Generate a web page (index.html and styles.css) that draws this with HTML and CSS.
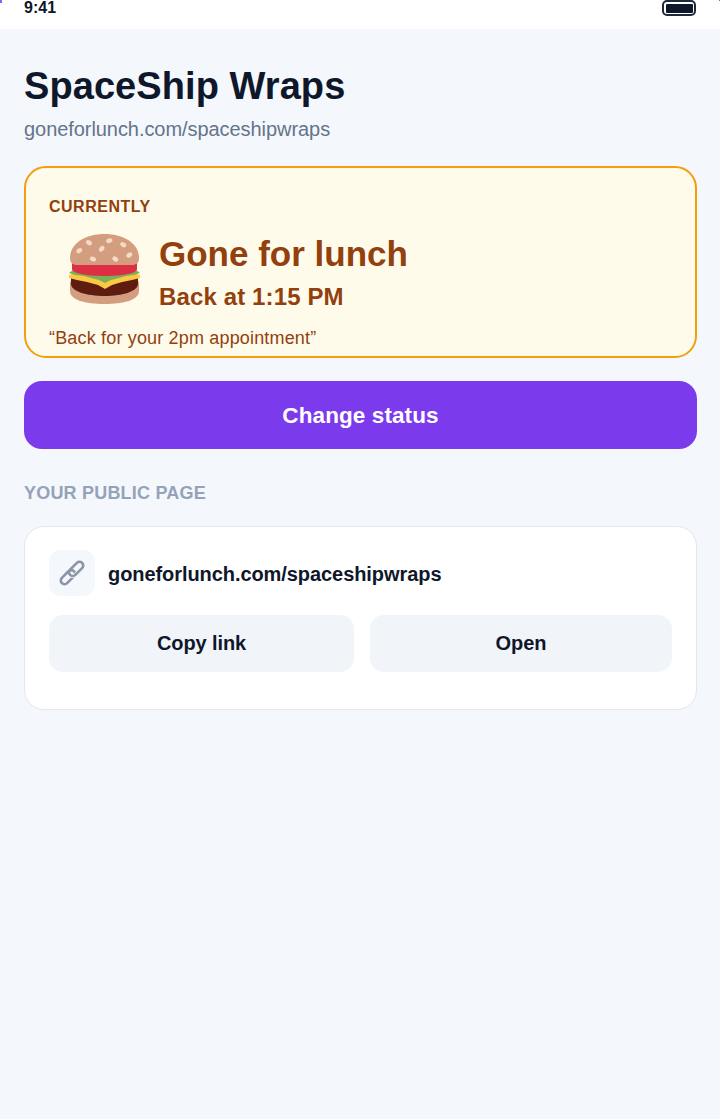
FILE: index.html
```html
<!DOCTYPE html>
<html lang="en">
<head>
    <meta charset="UTF-8">
    <meta name="viewport" content="width=device-width, initial-scale=1.0">
    <title>SpaceShip Wraps</title>
    <link rel="stylesheet" href="styles.css">
</head>
<body>
    <div class="status-bar">
        <span class="status-time">9:41</span>
        <span class="battery"><span class="battery-fill"></span></span>
    </div>

    <main class="content">
        <h1>SpaceShip Wraps</h1>
        <p class="page-url">goneforlunch.com/spaceshipwraps</p>

        <section class="status-card">
            <div class="status-label">CURRENTLY</div>
            <div class="status-row">
                <svg class="burger" viewBox="0 0 80 80" width="80" height="80" role="img" aria-label="Burger">
                    <path fill="#d59d80" d="M6 55c0-4 3-6 7-6h55c4 0 7 2 7 6v7c0 9-15 13-34.500 13S6 71 6 62z"/>
                    <path fill="#5f1d0f" d="M7 47h67v8c0 7-15 12-33.500 12S7 62 7 55z"/>
                    <path fill="#fcc846" d="M5 46L12 44H70L76 46V49L68 51 58 53 48 56 41 60 34 56 23 53 13 51 5 49Z"/>
                    <path fill="#77b255" d="M5 44L9 41H72L76 44 70 46 62 47 55 49 47 51 41 54 35 51 27 49 20 47 11 46Z"/>
                    <path fill="#dd2e44" d="M8 33h65v7c0 4-13 7-32.500 7S8 44 8 40z"/>
                    <path fill="#d59d80" d="M6 29C6 14 22 5 40.500 5S75 14 75 29c0 5-3 7-7 7H13c-4 0-7-2-7-7z"/>
                    <g fill="#f2dcc4">
                        <ellipse cx="25" cy="13.700" rx="3.200" ry="2.300" transform="rotate(30 25 13.700)"/>
                        <ellipse cx="45.300" cy="11.700" rx="3.200" ry="2.300" transform="rotate(-20 45.300 11.700)"/>
                        <ellipse cx="59.300" cy="15.700" rx="3.200" ry="2.300" transform="rotate(30 59.300 15.700)"/>
                        <ellipse cx="15.300" cy="21.700" rx="3.200" ry="2.300" transform="rotate(-35 15.300 21.700)"/>
                        <ellipse cx="37.700" cy="19.700" rx="3.200" ry="2.300" transform="rotate(-50 37.700 19.700)"/>
                        <ellipse cx="65.300" cy="26" rx="3.200" ry="2.300" transform="rotate(-35 65.300 26)"/>
                        <ellipse cx="29" cy="30" rx="3.200" ry="2.300" transform="rotate(25 29 30)"/>
                        <ellipse cx="51.300" cy="30" rx="3.200" ry="2.300" transform="rotate(35 51.300 30)"/>
                    </g>
                </svg>
                <div class="status-text">
                    <div class="status-title">Gone for lunch</div>
                    <div class="status-back">Back at 1:15 PM</div>
                </div>
            </div>
            <p class="status-note">“Back for your 2pm appointment”</p>
        </section>

        <button class="change-button">Change status</button>

        <h2>YOUR PUBLIC PAGE</h2>

        <section class="link-card">
            <div class="link-row">
                <div class="link-icon">
                    <svg viewBox="0 0 28 28" width="28" height="28" fill="none" stroke-width="2.600" stroke-linecap="round">
                        <g transform="rotate(-45 14 14)">
                            <rect x="-0.300" y="10.300" width="17" height="7.400" rx="3.700" stroke="#8b95a7"/>
                            <rect x="11.300" y="10.300" width="17" height="7.400" rx="3.700" stroke="#f4f7fc" stroke-width="3.800"/>
                            <rect x="11.300" y="10.300" width="17" height="7.400" rx="3.700" stroke="#8b95a7"/>
                            <path d="M9 10.300h4a3.700 3.700 0 0 1 3 1.700" stroke="#8b95a7"/>
                        </g>
                    </svg>
                </div>
                <span class="link-text">goneforlunch.com/spaceshipwraps</span>
            </div>
            <div class="link-actions">
                <button class="action-button copy-button">Copy link</button>
                <button class="action-button">Open</button>
            </div>
        </section>
    </main>
</body>
</html>
```

FILE: styles.css
```css
* {
    box-sizing: border-box;
}
html, body {
    margin: 0;
    padding: 0;
}
body {
    font-family: "Liberation Sans", Arial, sans-serif;
    background-color: #f4f7fc;
    color: #0f172a;
    min-height: 1119px;
}
.status-bar {
    position: relative;
    height: 29px;
    background: #fff;
    padding: 0 24px;
    display: flex;
    justify-content: space-between;
    align-items: flex-start;
}
/* tiny purple specks in the top corners */
.status-bar::before,
.status-bar::after {
    content: "";
    position: absolute;
    top: 0;
    background: #8b5cf6;
}
.status-bar::before {
    left: 0;
    width: 2px;
    height: 3px;
}
.status-bar::after {
    right: 0;
    width: 1px;
    height: 1px;
}
.status-time {
    font-size: 16px;
    font-weight: bold;
    line-height: 16px;
}
.battery {
    width: 34px;
    height: 16px;
    border: 2.5px solid #1e293b;
    border-radius: 5px;
    padding: 1.5px;
    display: block;
}
.battery-fill {
    display: block;
    height: 100%;
    background: #0f172a;
    border-radius: 1px;
}
.content {
    padding: 0 23px 0 24px;
}
h1 {
    margin: 35px 0 0;
    font-size: 38px;
    line-height: 44px;
    font-weight: bold;
    letter-spacing: 0.07px;
}
.page-url {
    margin: 9px 0 0;
    font-size: 20px;
    line-height: 24px;
    letter-spacing: -0.06px;
    color: #64748b;
}
.status-card {
    margin-top: 25px;
    height: 192px;
    padding: 30px 23px 0;
    background: #fffbeb;
    border: 2px solid #f59e0b;
    border-radius: 22px;
    color: #92400e;
}
.status-label {
    font-size: 16px;
    font-weight: bold;
    line-height: 18px;
    letter-spacing: 0.5px;
}
.status-row {
    display: flex;
    align-items: flex-start;
    gap: 15px;
    margin-top: 13px;
    padding-left: 15px;
}
.burger {
    flex-shrink: 0;
}
.status-text {
    padding-top: 5px;
}
.status-title {
    font-size: 35px;
    font-weight: bold;
    line-height: 40px;
}
.status-back {
    margin-top: 9px;
    font-size: 24px;
    font-weight: bold;
    line-height: 28px;
    letter-spacing: 0.13px;
}
.status-note {
    margin: 16px 0 0;
    font-size: 18px;
    line-height: 22px;
    letter-spacing: 0.17px;
}
.change-button {
    display: block;
    width: 100%;
    height: 68px;
    margin-top: 23px;
    padding: 1px 0 0;
    border: none;
    border-radius: 18px;
    background-color: #7c3aed;
    color: #fff;
    font-family: inherit;
    font-size: 22.5px;
    font-weight: bold;
    letter-spacing: 0.1px;
}
h2 {
    margin: 33px 0 0;
    font-size: 18px;
    line-height: 22px;
    font-weight: bold;
    color: #94a3b8;
    letter-spacing: 0.2px;
}
.link-card {
    margin-top: 22px;
    height: 184px;
    padding: 23px 24px;
    background: #fff;
    border: 1px solid #e2e8f0;
    border-radius: 20px;
}
.link-row {
    display: flex;
    align-items: center;
    gap: 13px;
}
.link-icon {
    width: 46px;
    height: 46px;
    border-radius: 12px;
    background: #f4f7fc;
    display: flex;
    align-items: center;
    justify-content: center;
}
.link-text {
    padding-top: 2px;
    font-size: 20px;
    font-weight: bold;
    letter-spacing: -0.07px;
}
.link-actions {
    display: grid;
    grid-template-columns: 305fr 302fr;
    gap: 16px;
    margin-top: 19px;
}
.action-button {
    height: 57px;
    border: none;
    border-radius: 14px;
    background-color: #f1f5f9;
    color: #0f172a;
    font-family: inherit;
    font-size: 20px;
    font-weight: bold;
}
.copy-button {
    letter-spacing: -0.1px;
}
```
